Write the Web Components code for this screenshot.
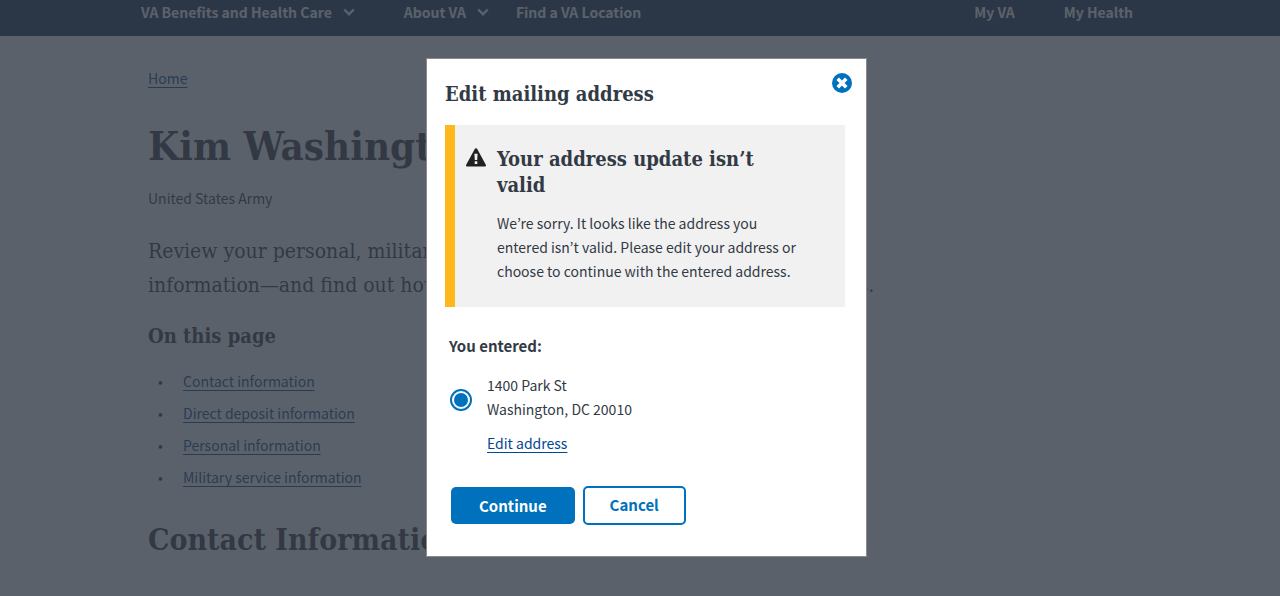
<!DOCTYPE html>
<html lang="en">
<head>
<meta charset="utf-8">
<meta name="viewport" content="width=device-width, initial-scale=1">
<title>Kim Washington | Veterans Affairs</title>
<style>
  :root {
    --sans: "Noto Sans CJK KR", "Noto Sans", sans-serif;
    --serif: "DejaVu Serif Condensed", "DejaVu Serif", serif;
    --ink: #323a45;
    --link: #004795;
    --primary: #0071bc;
  }
  html, body { margin: 0; height: 100%; }
  body { background: #fff; color: var(--ink); font: 14px/24px var(--sans); overflow: hidden; }
</style>
</head>
<body>
<va-app></va-app>
<script>
const define = (name, html) => customElements.define(name, class extends HTMLElement {
  constructor() {
    super();
    this.attachShadow({ mode: 'open' }).innerHTML = html;
  }
});

const chevron = `<svg width="12" height="8" viewBox="0 0 12 8" aria-hidden="true"><path d="M1.200 1.500 6 6.200l4.800-4.700" fill="none" stroke="#fff" stroke-width="2.400"/></svg>`;

define('va-header', `
<style>
  :host { display: block; background: #112e51; }
  nav { display: flex; padding: 0 147px 12px 141px; color: #fff; font-weight: 700; white-space: nowrap; }
  button { all: unset; display: flex; align-items: center; gap: 11px; cursor: pointer; }
  a { color: inherit; text-decoration: none; }
  .benefits { margin-right: 49px; }
  .about { margin-right: 27px; }
  .personal { display: flex; gap: 49px; margin-left: auto; }
</style>
<nav aria-label="Main">
  <button class="benefits" type="button">VA Benefits and Health Care ${chevron}</button>
  <button class="about" type="button">About VA ${chevron}</button>
  <a href="#">Find a VA Location</a>
  <div class="personal"><a href="#">My VA</a><a href="#">My Health</a></div>
</nav>`);

define('va-toc', `
<style>
  :host { display: block; }
  h2 { margin: 0 0 19px; font: 700 20px/28px var(--serif); }
  ul { list-style: none; margin: 0; padding: 0 0 0 10px; display: grid; gap: 8px; }
  li { display: flex; }
  li::before { content: "•"; width: 25px; }
  a { color: var(--link); text-underline-offset: 3px; }
</style>
<h2>On this page</h2>
<ul>
  <li><a href="#contact">Contact information</a></li>
  <li><a href="#">Direct deposit information</a></li>
  <li><a href="#">Personal information</a></li>
  <li><a href="#">Military service information</a></li>
</ul>`);

define('va-profile', `
<style>
  :host { display: block; padding: 30px 148px 0; }
  a { color: var(--link); text-underline-offset: 3px; }
  h1 { margin: 28px 0 12px; font: 700 40px/56px var(--serif); }
  p { margin: 0; }
  .intro { margin: 24px 0 20px; max-width: 740px; font: 21px/34px var(--serif); }
  .contact { margin: 29px 0 0; font: 700 30px/44px var(--serif); }
</style>
<nav aria-label="Breadcrumb"><a href="#">Home</a></nav>
<h1>Kim Washington</h1>
<p>United States Army</p>
<p class="intro">Review your personal, military service, financial, and other contact information—and find out how to update and change all of your VA records.</p>
<va-toc></va-toc>
<h2 class="contact" id="contact">Contact Information</h2>`);

define('va-alert', `
<style>
  :host { display: flex; gap: 10px; padding: 21px 35px 24px 11px; background: #f1f1f1; border-left: 10px solid #fdb81e; }
  svg { flex: none; margin-top: 1px; }
  h2 { margin: 0 0 13px; padding-right: 20px; font: 700 20px/26px var(--serif); }
  p { margin: 0; }
</style>
<svg width="21" height="21" viewBox="0 0 21 21" aria-hidden="true">
  <path d="M10 1.200c.5 0 .9.2 1.100.6l8.700 16c.5.900-.1 1.700-1.100 1.700H1.300c-1 0-1.600-.8-1.100-1.700l8.700-16c.2-.4.600-.6 1.100-.6Z" fill="#212121"/>
  <path d="M8.400 6.800h3.200l-.4 6.200H8.800ZM8.700 14.200h2.600v2.800H8.700Z" fill="#f1f1f1"/>
</svg>
<div><h2><slot name="title"></slot></h2><p><slot></slot></p></div>`);

define('va-address-choice', `
<style>
  :host { display: block; padding: 0 4px; }
  fieldset { margin: 0; padding: 0; border: 0; }
  legend { padding: 0; font-weight: 700; font-size: 15px; }
  .row { display: grid; grid-template-columns: 22px 1fr; column-gap: 15px; padding: 15px 0 0 1px; }
  input { appearance: none; width: 22px; height: 22px; margin: 16px 0 0; border: 2px solid var(--primary); border-radius: 50%;
    background: var(--primary) content-box; padding: 2px; box-sizing: border-box; }
  a { grid-column: 2; justify-self: start; margin-top: 10px; color: var(--link); text-underline-offset: 3px; }
</style>
<fieldset>
  <legend>You entered:</legend>
  <div class="row">
    <input type="radio" name="address" id="entered" checked>
    <label for="entered">1400 Park St<br>Washington, DC 20010</label>
    <a href="#">Edit address</a>
  </div>
</fieldset>`);

define('va-button', `
<style>
  :host { display: block; }
  button { display: block; box-sizing: border-box; font: 700 15px/23px var(--sans); border-radius: 5px; padding: 7px 28px;
    border: 0; color: #fff; background: var(--primary); cursor: pointer; }
  :host([secondary]) button { padding: 5px 25px 7px; border: 2px solid var(--primary); background: #fff; color: var(--primary); }
</style>
<button type="button"><slot></slot></button>`);

define('va-modal', `
<style>
  :host { position: fixed; inset: 0; box-sizing: border-box; display: flex; justify-content: center; align-items: flex-start;
    padding: 58px 0 0 13px; background: rgba(50, 58, 69, .8); }
  section { box-sizing: border-box; width: 100%; max-width: 441px; padding: 14px 21px 31px 18px; background: #fff; border: 1px solid #8b8b8b; }
  header { display: flex; justify-content: space-between; align-items: flex-start; margin: 0 -7px 17px 0; }
  h1 { margin: 7px 0 0; font: 700 20px/28px var(--serif); }
  .close { all: unset; display: flex; cursor: pointer; }
  va-address-choice { margin: 27px 0 31px; }
  .actions { display: flex; align-items: center; gap: 8px; padding-left: 6px; }
</style>
<section role="dialog" aria-modal="true" aria-labelledby="title">
  <header>
    <h1 id="title">Edit mailing address</h1>
    <button class="close" type="button" aria-label="Close">
      <svg width="20" height="20" viewBox="0 0 20 20" aria-hidden="true"><circle cx="10" cy="10" r="10" fill="#0071bc"/><path d="m7 7 6 6m0-6-6 6" stroke="#fff" stroke-width="3.600" stroke-linecap="square"/></svg>
    </button>
  </header>
  <va-alert>
    <span slot="title">Your address update isn’t valid</span>
    We’re sorry. It looks like the address you entered isn’t valid. Please edit your address or choose to continue with the entered address.
  </va-alert>
  <va-address-choice></va-address-choice>
  <div class="actions">
    <va-button>Continue</va-button>
    <va-button secondary>Cancel</va-button>
  </div>
</section>`);

define('va-app', `
<style>:host { display: block; }</style>
<va-header></va-header>
<main><va-profile></va-profile></main>
<va-modal></va-modal>`);
</script>
</body>
</html>
